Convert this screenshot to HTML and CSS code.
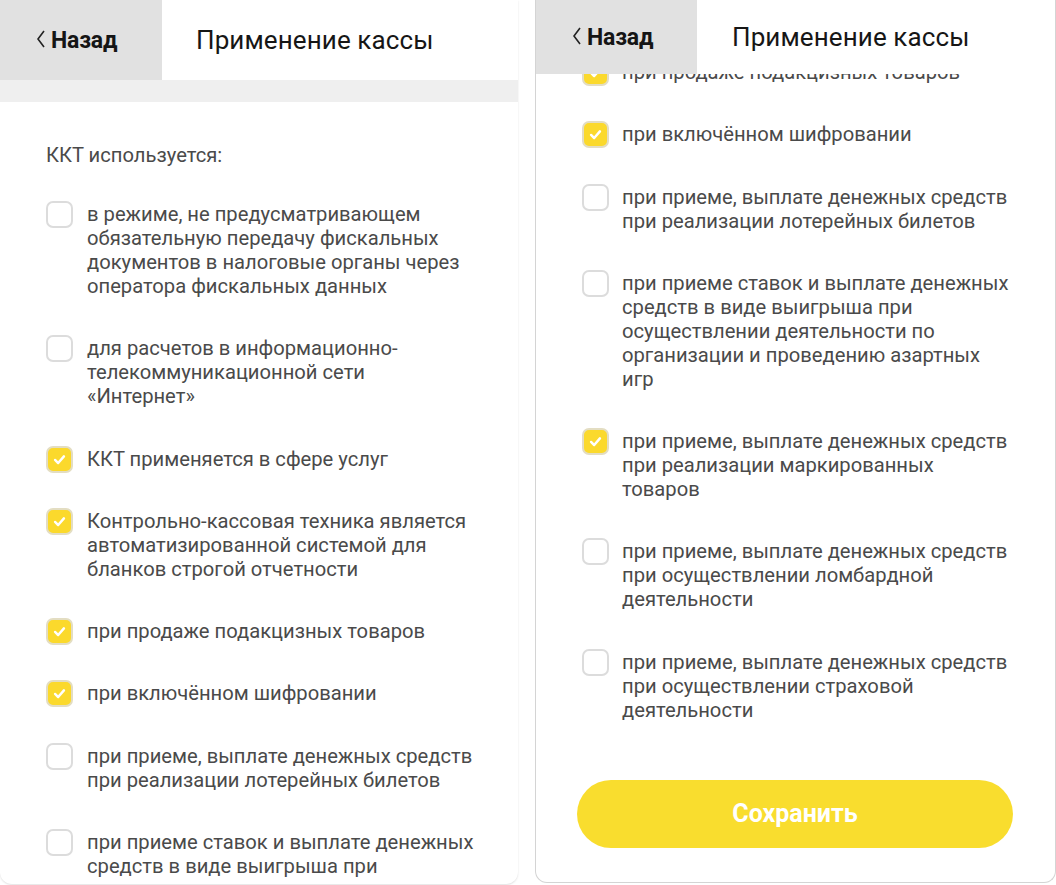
FILE: index.html
```html
<!DOCTYPE html>
<html lang="ru">
<head>
<meta charset="utf-8">
<title>Применение кассы</title>
<link rel="stylesheet" href="styles.css">
</head>
<body>
<div class="screens">
  <section class="panel panel-left">
    <header class="bar">
      <div class="back"><svg class="chev" viewBox="0 0 10 20" width="10" height="20"><polyline points="8,2 2,10 8,18" fill="none" stroke="#222" stroke-width="1.6"/></svg><span>Назад</span></div>
      <h1 class="title">Применение кассы</h1>
    </header>
    <div class="strip"></div>
    <div class="content">
      <p class="label">ККТ используется:</p>
      <ul class="list">
        <li class="item"><span class="box"></span><span class="txt">в режиме, не предусматривающем обязательную передачу фискальных документов в налоговые органы через оператора фискальных данных</span></li>
        <li class="item"><span class="box"></span><span class="txt">для расчетов в информационно-телекоммуникационной сети «Интернет»</span></li>
        <li class="item"><span class="box on"><svg viewBox="0 0 26 26"><polyline points="8,13.5 11.5,17 18,9.5"/></svg></span><span class="txt">ККТ применяется в сфере услуг</span></li>
        <li class="item"><span class="box on"><svg viewBox="0 0 26 26"><polyline points="8,13.5 11.5,17 18,9.5"/></svg></span><span class="txt">Контрольно-кассовая техника является автоматизированной системой для бланков строгой отчетности</span></li>
        <li class="item"><span class="box on"><svg viewBox="0 0 26 26"><polyline points="8,13.5 11.5,17 18,9.5"/></svg></span><span class="txt">при продаже подакцизных товаров</span></li>
        <li class="item"><span class="box on"><svg viewBox="0 0 26 26"><polyline points="8,13.5 11.5,17 18,9.5"/></svg></span><span class="txt">при включённом шифровании</span></li>
        <li class="item"><span class="box"></span><span class="txt">при приеме, выплате денежных средств при реализации лотерейных билетов</span></li>
        <li class="item"><span class="box"></span><span class="txt">при приеме ставок и выплате денежных средств в виде выигрыша при</span></li>
      </ul>
    </div>
  </section>

  <section class="panel panel-right">
    <header class="bar bar-short">
      <div class="back"><svg class="chev" viewBox="0 0 10 20" width="10" height="20"><polyline points="8,2 2,10 8,18" fill="none" stroke="#222" stroke-width="1.6"/></svg><span>Назад</span></div>
      <h1 class="title">Применение кассы</h1>
    </header>
    <div class="content content-right">
      <ul class="list list-scrolled">
        <li class="item"><span class="box on"><svg viewBox="0 0 26 26"><polyline points="8,13.5 11.5,17 18,9.5"/></svg></span><span class="txt">при продаже подакцизных товаров</span></li>
        <li class="item"><span class="box on"><svg viewBox="0 0 26 26"><polyline points="8,13.5 11.5,17 18,9.5"/></svg></span><span class="txt">при включённом шифровании</span></li>
        <li class="item"><span class="box"></span><span class="txt">при приеме, выплате денежных средств при реализации лотерейных билетов</span></li>
        <li class="item"><span class="box"></span><span class="txt">при приеме ставок и выплате денежных средств в виде выигрыша при осуществлении деятельности по организации и проведению азартных игр</span></li>
        <li class="item"><span class="box on"><svg viewBox="0 0 26 26"><polyline points="8,13.5 11.5,17 18,9.5"/></svg></span><span class="txt">при приеме, выплате денежных средств при реализации маркированных товаров</span></li>
        <li class="item"><span class="box"></span><span class="txt">при приеме, выплате денежных средств при осуществлении ломбардной деятельности</span></li>
        <li class="item"><span class="box"></span><span class="txt">при приеме, выплате денежных средств при осуществлении страховой деятельности</span></li>
      </ul>
      <button class="save" type="button">Сохранить</button>
    </div>
  </section>
</div>
</body>
</html>
```

FILE: styles.css
```css
* { box-sizing: border-box; }
html, body { margin: 0; padding: 0; background: #ffffff; }
body {
  width: 1056px;
  height: 885px;
  overflow: hidden;
  font-family: Roboto, "Liberation Sans", Arial, sans-serif;
  color: #4a4a4a;
}
.screens {
  display: flex;
  gap: 17px;
  align-items: flex-start;
}
.panel {
  background: #fff;
  overflow: hidden;
  display: flex;
  flex-direction: column;
}
.panel-left {
  width: 518px;
  height: 884px;
  border-radius: 0 0 12px 12px;
  box-shadow: 0 1px 2px rgba(0,0,0,0.12);
}
.panel-right {
  width: 521px;
  height: 883px;
  border: 1px solid #d4d4d4;
  border-top: none;
  border-radius: 0 0 12px 12px;
}
.bar {
  display: flex;
  align-items: stretch;
  height: 80px;
  flex: none;
  background: #fff;
}
.bar-short { height: 74px; }
.back {
  width: 162px;
  background: #e1e1e1;
  display: flex;
  align-items: center;
  padding-left: 36px;
  gap: 5px;
  font-weight: 700;
  font-size: 23px;
  color: #151515;
  letter-spacing: -0.2px;
}
.bar-short .back { width: 161px; }
.chev { flex: none; margin-top: -2px; }
.title {
  margin: 0 0 0 34px;
  align-self: center;
  font-weight: 400;
  font-size: 26px;
  color: #161616;
  letter-spacing: 0.1px;
}
.bar-short .title { margin-left: 35px; }
.strip {
  height: 22px;
  background: #efefef;
  flex: none;
}
.content {
  padding: 41px 42px 0 46px;
}
.label {
  margin: 0 0 35px;
  font-size: 20.2px;
  line-height: 24px;
  color: #4a4a4a;
}
.list {
  list-style: none;
  margin: 0;
  padding: 0;
  display: flex;
  flex-direction: column;
  gap: 38.3px;
}
.item {
  display: flex;
  align-items: flex-start;
  gap: 14px;
  font-size: 20.2px;
  line-height: 24px;
}
.txt { flex: 1; }
.box {
  flex: none;
  width: 27px;
  height: 27px;
  margin: -1px 0 -2px;
  border: 2px solid #dcdcdc;
  border-radius: 7px;
  background: #fff;
  display: flex;
  align-items: center;
  justify-content: center;
}
.box.on {
  background: #fbd92c;
  border-color: #e3ddc2;
}
.box svg {
  width: 23px;
  height: 23px;
  fill: none;
  stroke: #fff;
  stroke-width: 2.8;
  stroke-linecap: round;
  stroke-linejoin: round;
}
.content-right {
  flex: 1;
  overflow: hidden;
  padding: 0 43px 0 46px;
  display: flex;
  flex-direction: column;
}
.list-scrolled {
  margin-top: -14px;
}
.content-right .item { gap: 13px; }
.save {
  margin: 58px 0 0 -5px;
  width: 436px;
  height: 68px;
  border: none;
  border-radius: 34px;
  background: #f9dd2e;
  color: #ffffff;
  font-family: Roboto, "Liberation Sans", Arial, sans-serif;
  font-weight: 700;
  font-size: 25px;
  flex: none;
}
```
